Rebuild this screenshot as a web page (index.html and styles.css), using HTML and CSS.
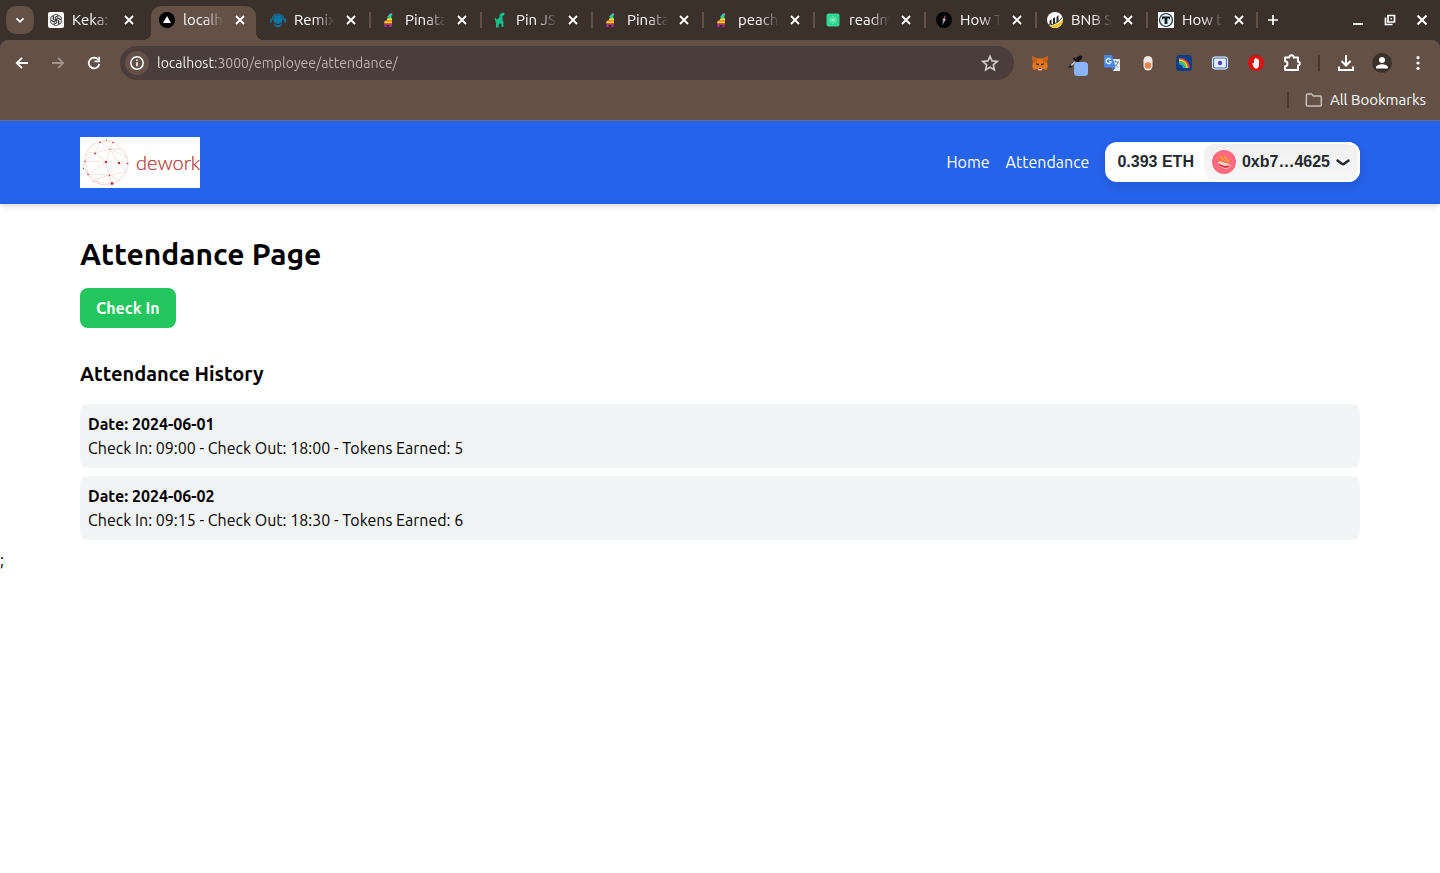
FILE: index.html
```html
<!DOCTYPE html>
<html lang="en">
<head>
<meta charset="utf-8">
<meta name="viewport" content="width=device-width, initial-scale=1">
<title>Attendance</title>
<link rel="stylesheet" href="styles.css">
</head>
<body>
<svg class="defs" aria-hidden="true">
  <symbol id="close" viewBox="0 0 16 16"><path d="M4 4l8 8M12 4l-8 8" stroke="#fff" stroke-width="1.800"/></symbol>
  <symbol id="pinata" viewBox="0 0 16 16"><path d="M6 5l3-3.500 2.500.5-1.500 3z" fill="#30c8b8"/><path d="M9 1.500L10.500.5 11 2z" fill="#e63888"/><path d="M7 4.500h3.500v2.500H6.500z" fill="#38c878"/><path d="M6.500 6.500h4.500v2H5.500z" fill="#f4e830"/><path d="M4 8.500l7-.500v2H4z" fill="#f58a20"/><path d="M3 9.500l8 .3v1.700H3.500z" fill="#f4dc20"/><path d="M3.500 11.300h7.500v1.400H3.500z" fill="#f03c50"/><path d="M3.500 12.500h2v2.500h-2zM8.500 12.500h2v2.500h-2z" fill="#c020c8"/></symbol>
</svg>
<header class="browser">
  <div class="strip">
    <button class="tab-search" aria-label="Search tabs"><svg width="16" height="16" viewBox="0 0 16 16"><path d="M4.500 6.300L8 9.800l3.500-3.500" fill="none" stroke="#fff" stroke-width="1.800"/></svg></button>
    <div class="tabs">
      <div class="tab"><svg class="fav" viewBox="0 0 16 16"><rect width="16" height="16" rx="2" fill="#fff"/><g fill="none" stroke="#222" stroke-width=".8"><path id="petal" d="M5.300 8V4.800a2.700 2.700 0 0 1 5-1.300L7.300 5.300v3"/><use href="#petal" transform="rotate(60 8 8)"/><use href="#petal" transform="rotate(120 8 8)"/><use href="#petal" transform="rotate(180 8 8)"/><use href="#petal" transform="rotate(240 8 8)"/><use href="#petal" transform="rotate(300 8 8)"/></g></svg><span class="title">Keka:</span><button class="x" aria-label="Close tab"><svg><use href="#close"/></svg></button></div>
      <div class="tab active"><svg class="fav" viewBox="0 0 16 16"><circle cx="8" cy="8" r="8" fill="#000"/><path d="M8 4l4 7H4z" fill="#fff"/></svg><span class="title">localh</span><button class="x" aria-label="Close tab"><svg><use href="#close"/></svg></button></div>
      <div class="tab"><svg class="fav" viewBox="0 0 16 16"><circle cx="8" cy="7.500" r="4.600" fill="#0b76a4"/><path d="M2 8a6 6 0 0 1 12 0" fill="none" stroke="#0b76a4" stroke-width="1.200"/><path d="M0 6.500h1.800v4H0zM14.200 6.500H16v4h-1.800z" fill="#0b76a4"/><path d="M3 11l3 2h4l3-2-2 3-3 1.500L5 14z" fill="#0b76a4"/></svg><span class="title">Remix</span><button class="x" aria-label="Close tab"><svg><use href="#close"/></svg></button></div>
      <div class="tab sep"><svg class="fav"><use href="#pinata"/></svg><span class="title">Pinata</span><button class="x" aria-label="Close tab"><svg><use href="#close"/></svg></button></div>
      <div class="tab sep"><svg class="fav" viewBox="0 0 16 16"><path d="M7 6l1-4 3-1.500 1.500.5-.5 2.500-1.500.5v4.500l1 1v5.500H9.500V12l-2.500-.5-.5 4H4V11L2.500 6.500 3.500 6l1.500 1.500z" fill="#10bd86"/></svg><span class="title">Pin JS</span><button class="x" aria-label="Close tab"><svg><use href="#close"/></svg></button></div>
      <div class="tab sep"><svg class="fav"><use href="#pinata"/></svg><span class="title">Pinata</span><button class="x" aria-label="Close tab"><svg><use href="#close"/></svg></button></div>
      <div class="tab sep"><svg class="fav"><use href="#pinata"/></svg><span class="title">peach</span><button class="x" aria-label="Close tab"><svg><use href="#close"/></svg></button></div>
      <div class="tab sep"><svg class="fav" viewBox="0 0 16 16"><rect x="1.500" y="1.500" width="13" height="13" rx="2" fill="#2fd890"/><path d="M8 4v8M5 5.500l6 5M11 5.500l-6 5M4 8h8" stroke="#8fefc2" stroke-width=".9"/></svg><span class="title">readm</span><button class="x" aria-label="Close tab"><svg><use href="#close"/></svg></button></div>
      <div class="tab sep"><svg class="fav" viewBox="0 0 16 16"><circle cx="8" cy="8" r="8" fill="#000"/><path d="M10 2.500L6 8.500h2.200z" fill="#e78"/><path d="M6 13.500l4-6.500H7.800z" fill="#9cc9dc"/></svg><span class="title">How T</span><button class="x" aria-label="Close tab"><svg><use href="#close"/></svg></button></div>
      <div class="tab sep"><svg class="fav" viewBox="0 0 16 16"><circle cx="8" cy="8" r="8" fill="#fff"/><path d="M2.500 12V9l2-2v5zM6 12V6.500l2-1.500v6.500zM9.500 11V5l2-2v6.500z" fill="#222"/><path d="M2 13.300C8 14 13 11 15.800 7A8 8 0 0 1 2 13.300z" fill="#efc71c"/><path d="M1.500 12.800C7 13 12 10 15 5.500" fill="none" stroke="#222" stroke-width="1"/></svg><span class="title">BNB S</span><button class="x" aria-label="Close tab"><svg><use href="#close"/></svg></button></div>
      <div class="tab sep"><svg class="fav" viewBox="0 0 16 16"><rect width="16" height="16" fill="#fff"/><circle cx="8" cy="8" r="6.500" fill="#e6edf2" stroke="#183448" stroke-width="1.200"/><path d="M4 4.500h8v2.800h-1.200V6.500H9.400V12H6.600V6.500H5.200v.8H4z" fill="#101c26"/></svg><span class="title">How t</span><button class="x" aria-label="Close tab"><svg><use href="#close"/></svg></button></div>
      <button class="new-tab" aria-label="New tab"><svg width="16" height="16" viewBox="0 0 16 16"><path d="M8 3v10M3 8h10" stroke="#fff" stroke-width="1.700"/></svg></button>
    </div>
    <div class="window">
      <button aria-label="Minimise"><svg width="16" height="16" viewBox="0 0 16 16"><path d="M3 12h10" stroke="#fff" stroke-width="1.800"/></svg></button>
      <button aria-label="Restore"><svg width="16" height="16" viewBox="0 0 16 16"><g fill="none" stroke="#fff" stroke-width="1.700"><path d="M6 3.500h6.500v6.500H6z"/><path d="M3.500 5.500v7h7"/></g><path d="M8.500 6h1.500v1.500H8.500z" fill="#fff"/></svg></button>
      <button aria-label="Close window"><svg width="16" height="16" viewBox="0 0 16 16"><path d="M3.500 3.500l9 9M12.500 3.500l-9 9" stroke="#fff" stroke-width="2"/></svg></button>
    </div>
  </div>
  <div class="chrome">
    <div class="toolbar">
      <button class="tool" aria-label="Back"><svg viewBox="0 0 16 16"><path d="M14 8H3M8 2.800L2.800 8 8 13.200" fill="none" stroke="#fff" stroke-width="1.800"/></svg></button>
      <button class="tool" aria-label="Forward"><svg viewBox="0 0 16 16"><path d="M2 8h11M8 2.800L13.200 8 8 13.200" fill="none" stroke="#a0948c" stroke-width="1.800"/></svg></button>
      <button class="tool" aria-label="Reload"><svg viewBox="0 0 16 16"><path d="M12.300 4.800A5.300 5.300 0 1 0 13.300 9" fill="none" stroke="#fff" stroke-width="1.800"/><path d="M13.900 1.700v5.500H8.400V5.600h3.900V1.700z" fill="#fff"/></svg></button>
      <div class="omnibox">
        <button class="info" aria-label="Site information"><svg width="16" height="16" viewBox="0 0 16 16"><circle cx="8" cy="8" r="6.200" fill="none" stroke="#fff" stroke-width="1.500"/><path d="M8 7.300v4M8 4.500v1.500" stroke="#fff" stroke-width="1.600"/></svg></button>
        <input class="url" aria-label="Address" value="localhost:3000/employee/attendance/">
        <button class="star" aria-label="Bookmark"><svg width="18" height="18" viewBox="0 0 18 18"><path d="M9 2.200l2 4.700 5.200.5-3.900 3.400 1.100 5L9 13.200l-4.400 2.600 1.100-5-3.900-3.400L7 6.900z" fill="none" stroke="#d3cbc8" stroke-width="1.600"/></svg></button>
      </div>
      <button class="tool" aria-label="MetaMask"><svg viewBox="0 0 16 16"><path d="M0 1l5.500 2.500h5L16 1l-1 6 .8 4-1.300 4-3.500-1-1.500 2h-3L5 14l-3.500 1L.2 11 1 7z" fill="#e2761b"/><path d="M0 1l5.500 3-1 4L1 7zM16 1l-5.500 3 1 4L15 7z" fill="#c95f18"/><path d="M4 8l3 1v1.300L4.500 10zM12 8L9 9v1.300l2.500-.3z" fill="#53331e"/><path d="M6 13h4l-.5 2h-3z" fill="#d8c1a5"/><path d="M6.800 13h2.400v1H6.800z" fill="#222"/></svg></button>
      <button class="tool" aria-label="Eyedropper"><svg class="dropper" viewBox="0 0 28 28"><path d="M14 9l4-2.500 2.500.5-1 3-3 2.500z" fill="#090909"/><path d="M12 8.500l6 5-1.200 1.300-6-5z" fill="#090909"/><path d="M6 19l1-2 6-6 2 2-6 5.500z" fill="#28231f"/><path d="M8.500 16l4-4 1.500 1-4 4z" fill="#c8c0b8"/><rect x="12" y="13" width="14" height="14" rx="3.500" fill="#8ab4f8"/></svg></button>
      <button class="tool" aria-label="Translate"><svg viewBox="0 0 16 16"><path d="M6 4h9a1 1 0 0 1 1 1v11H9z" fill="#e5e7e8"/><path d="M8 7h7M11.500 5.500V7M9.500 12c3-1 4-3 4.500-5M10 8.500l4 4" stroke="#6784a3" stroke-width=".9" fill="none"/><path d="M1 0h7l3.500 12.500H1a1 1 0 0 1-1-1V1a1 1 0 0 1 1-1z" fill="#4a88e8"/><path d="M7.500 12.500h4L9 16z" fill="#3165bf"/><path d="M6.700 4.800A2.500 2.500 0 1 0 7 6.800H5" fill="none" stroke="#fff" stroke-width="1.200"/></svg></button>
      <button class="tool" aria-label="Recorder"><svg viewBox="0 0 16 16"><rect x="3.500" y="1" width="9" height="14.500" rx="4.500" fill="#eeeae7"/><circle cx="8" cy="10.500" r="3.300" fill="#ed814e"/></svg></button>
      <button class="tool" aria-label="Rainbow"><svg viewBox="0 0 16 16"><rect width="16" height="16" rx="3.500" fill="#103c85"/><g fill="none" stroke-width="1.700"><path d="M3 3.500A9.500 9.500 0 0 1 12.800 13" stroke="#e54735"/><path d="M3 5.200A7.800 7.800 0 0 1 11.100 13" stroke="#fed52d"/><path d="M3 6.900A6.100 6.100 0 0 1 9.400 13" stroke="#5bcb5a"/><path d="M3 8.600A4.400 4.400 0 0 1 7.700 13" stroke="#26a8dd"/></g></svg></button>
      <button class="tool" aria-label="Screen capture"><svg viewBox="0 0 16 16"><rect y="1.500" width="16" height="13" rx="3" fill="#fff"/><rect x="1.500" y="3" width="13" height="10" rx="1.500" fill="#e6f0ff" stroke="#2b69d1" stroke-width="1.200"/><circle cx="8" cy="8" r="2.200" fill="#4f43c4"/></svg></button>
      <button class="tool" aria-label="Ad blocker"><svg viewBox="0 0 16 16"><circle cx="8" cy="8" r="8" fill="#df1010"/><path d="M4.300 8.300l1-.5.7 1V4.300h1.200V3h1.200v.7h1.200v.8h1.300V10c0 2-1 3.600-3 3.600C6 13.600 5 11 4.300 8.300z" fill="#fff"/></svg></button>
      <button class="tool" aria-label="Extensions"><svg class="wide" viewBox="0 0 20 20"><path d="M3 4.500h4.300a2.200 2.200 0 0 1 4.400 0H16v4.200a1.800 1.800 0 0 1 0 3.600V17H3v-3.700a2.500 2.500 0 0 0 0-5z" fill="none" stroke="#fff" stroke-width="1.900" stroke-linejoin="round"/></svg></button>
      <span class="rule gap"></span>
      <button class="tool" aria-label="Downloads"><svg viewBox="0 0 16 16"><path d="M8 0v10M3.500 6L8 10.500 12.500 6M1 11.500V15h14v-3.500" fill="none" stroke="#fff" stroke-width="2"/></svg></button>
      <button class="tool" aria-label="Profile"><svg class="wide" viewBox="0 0 20 20"><circle cx="10" cy="10" r="10" fill="#3c302b"/><circle cx="10" cy="7" r="3" fill="#fff"/><path d="M4 15.500v-1.200c0-2 4-3 6-3s6 1 6 3v1.200z" fill="#fff"/></svg></button>
      <button class="tool" aria-label="Menu"><svg viewBox="0 0 16 16"><g fill="#fff"><circle cx="8" cy="2.700" r="1.600"/><circle cx="8" cy="8" r="1.600"/><circle cx="8" cy="13.300" r="1.600"/></g></svg></button>
    </div>
    <div class="bookmarks">
      <span class="rule"></span>
      <button class="all"><svg width="18" height="16" viewBox="0 0 18 16"><path d="M1.500 3a1 1 0 0 1 1-1h4l1.800 2h7a1 1 0 0 1 1 1v8a1 1 0 0 1-1 1h-13a1 1 0 0 1-1-1z" fill="none" stroke="#c8bfba" stroke-width="1.500"/></svg>All Bookmarks</button>
    </div>
  </div>
</header>
<nav class="nav">
  <div class="container nav-row">
    <a class="logo" href="#" aria-label="dework">
      <svg width="120" height="51" viewBox="0 0 120 51">
        <rect width="120" height="51" fill="#fff"/>
        <g fill="none" stroke="#ecd0cd" stroke-width=".6">
          <path d="M20 5L33 5 41 12 47 20 48 26 46 35 40 43 32 47 22 48 12 44 8 37 3 31 5 24 7 15 15 16 20 5 30 12 41 12M15 16L30 12 33 5M15 16L26 25 30 12 39 26 48 26M5 24L15 16M5 24L26 25 39 26 29 38 26 25 8 37 29 38 46 35 39 26 47 20 30 12M8 37L5 24M29 38L32 47 12 44 29 38 40 43M7 15L12 8 20 5 27 3 33 5M3 31L8 37 22 48"/>
          <circle cx="26" cy="25.500" r="22" stroke-dasharray="3 2"/>
        </g>
        <g fill="#b73535"><circle cx="26" cy="25" r="1.200"/><circle cx="39" cy="26" r="1.200"/><circle cx="32" cy="46.500" r="1.400"/><circle cx="15" cy="16.500" r=".9"/><circle cx="20" cy="5.500" r=".8"/><circle cx="33" cy="5.500" r=".8"/><circle cx="8" cy="37.500" r=".8"/><circle cx="29.500" cy="38.500" r=".7"/><circle cx="47.500" cy="26.500" r=".8"/><circle cx="5" cy="24.500" r=".7"/><circle cx="30" cy="12.500" r=".6"/><circle cx="3.500" cy="31.500" r=".6"/><circle cx="26.500" cy="3" r=".6"/></g>
        <text class="wordmark" x="56" y="33">dework</text>
      </svg>
    </a>
    <div class="links">
      <a href="#">Home</a>
      <a href="#">Attendance</a>
      <div class="wallet">
        <span class="balance">0.393 ETH</span>
        <button class="account"><svg width="24" height="24" viewBox="0 0 24 24"><circle cx="12" cy="12" r="12" fill="#ff6a80"/><path d="M6 12.500l2-1.500 10 3.500 1 1.500-2.500 2.200-4 .6L7 16z" fill="#f0d5cc"/><path d="M6.500 13.500l6 2.500 5.500-.8-1 2-4.500.8L7 15.500z" fill="#e8303c"/><path d="M6 8.500c1-2.500 3.500-3.500 6-2.700l6 4c1.500 1.500 0 3.500-1.500 3.200l-9-1.700c-1.400-.4-2-1.500-1.500-2.800z" fill="#ff7a45"/><path d="M8.500 6.500l5 5M12 6l4.500 6" stroke="#ffad7a" stroke-width="1"/></svg><span>0xb7…4625</span><svg width="14" height="7" viewBox="0 0 14 7"><path d="M1.500 1.500L5.800 4.700a2 2 0 0 0 2.400 0L12.500 1.500" fill="none" stroke="#25292e" stroke-width="2.400" stroke-linecap="round"/></svg></button>
      </div>
    </div>
  </div>
</nav>
<main class="container page">
  <h1>Attendance Page</h1>
  <button class="check">Check In</button>
  <h2>Attendance History</h2>
  <ul class="history">
    <li><strong>Date: 2024-06-01</strong><p>Check In: 09:00 - Check Out: 18:00 - Tokens Earned: 5</p></li>
    <li><strong>Date: 2024-06-02</strong><p>Check In: 09:15 - Check Out: 18:30 - Tokens Earned: 6</p></li>
  </ul>
</main>
<div class="stray">;</div>
</body>
</html>
```

FILE: styles.css
```css
* { box-sizing: border-box; }
body {
  margin: 0;
  background: #fff;
  color: #000;
  font: 16px/24px Ubuntu, "Noto Sans", sans-serif;
}
button {
  border: 0;
  padding: 0;
  background: none;
  color: inherit;
  font: inherit;
}
svg { display: block; flex: none; }
a { color: inherit; text-decoration: none; }
h1, h2, p, ul { margin: 0; padding: 0; }
.defs { position: absolute; width: 0; height: 0; }

/* Browser window */
.browser {
  background: #3c302b;
  color: #fff;
  font-size: 15px;
  border-bottom: 1px solid #746a72;
}
.strip { display: flex; height: 40px; padding: 0 8px 0 6px; }
.tab-search {
  display: grid;
  place-items: center;
  flex: none;
  width: 28px;
  height: 28px;
  margin: 6px 6px 0 0;
  border-radius: 10px;
  background: #635046;
}
.tabs { display: flex; flex: 1; min-width: 0; }
.tab {
  position: relative;
  display: flex;
  align-items: center;
  gap: 8px;
  flex: 0 1 111px;
  min-width: 0;
  padding: 0 14px 0 8px;
}
.fav { width: 16px; height: 16px; }
.title {
  flex: 1;
  min-width: 0;
  white-space: nowrap;
  -webkit-mask-image: linear-gradient(90deg, #000 50%, transparent);
  mask-image: linear-gradient(90deg, #000 50%, transparent);
}
.x svg { width: 16px; height: 16px; }
.sep::before {
  content: "";
  position: absolute;
  left: -4px;
  top: 12px;
  width: 2px;
  height: 16px;
  background: #635046;
}
.active::before {
  content: "";
  position: absolute;
  inset: 6px 6px 0 0;
  border-radius: 10px 10px 0 0;
  background: #635046;
}
.active::after {
  content: "";
  position: absolute;
  left: -8px;
  right: -2px;
  bottom: 0;
  height: 8px;
  background:
    radial-gradient(circle at 0 0, transparent 8px, #635046 8px) left / 8px 8px no-repeat,
    radial-gradient(circle at 100% 0, transparent 8px, #635046 8px) right / 8px 8px no-repeat;
}
.active > * { position: relative; }
.new-tab {
  position: relative;
  display: grid;
  place-items: center;
  flex: none;
  width: 28px;
  margin-left: -2px;
}
.new-tab::before {
  content: "";
  position: absolute;
  left: -3px;
  top: 12px;
  width: 2px;
  height: 16px;
  background: #635046;
}
.window { display: flex; align-items: center; gap: 16px; padding-right: 2px; }
.chrome { background: #635046; border-radius: 8px 8px 0 0; }
.toolbar {
  display: flex;
  align-items: center;
  gap: 8px;
  height: 46px;
  padding: 0 8px;
}
.tool { display: grid; place-items: center; flex: none; width: 28px; height: 28px; }
.tool svg { width: 16px; height: 16px; }
.tool .wide { width: 20px; height: 20px; }
.tool .dropper { width: 28px; height: 28px; }
.omnibox {
  display: flex;
  align-items: center;
  flex: 1;
  min-width: 0;
  height: 34px;
  margin: 0 4px;
  padding: 0 15px 0 5px;
  border-radius: 17px;
  background: #4b3d3a;
}
.info {
  display: grid;
  place-items: center;
  width: 24px;
  height: 24px;
  border-radius: 12px;
  background: #635046;
}
.url {
  flex: 1;
  min-width: 0;
  margin-left: 8px;
  padding: 0;
  border: 0;
  outline: 0;
  font: inherit;
  font-size: 14px;
  color: transparent;
  background: linear-gradient(90deg, #fff 58px, #c0b7b4 58px);
  -webkit-background-clip: text;
  background-clip: text;
}
.rule { width: 2px; height: 16px; background: #46372f; }
.rule.gap { margin: 0 4px; }
.bookmarks {
  display: flex;
  align-items: center;
  justify-content: flex-end;
  gap: 16px;
  height: 34px;
  padding: 0 14px 6px 0;
}
.all { display: flex; align-items: center; gap: 7px; }

/* Site navigation */
.container { width: 100%; max-width: 1280px; margin: 0 auto; }
.nav {
  background: #2563eb;
  color: #fff;
  box-shadow: 0 4px 6px -1px rgba(0, 0, 0, .1), 0 2px 4px -2px rgba(0, 0, 0, .1);
}
.nav-row { display: flex; align-items: center; justify-content: space-between; padding: 16px 0; }
.wordmark { font: 300 20px Lato, sans-serif; fill: #b53030; stroke: #b53030; stroke-width: .2px; }
.links { display: flex; align-items: center; gap: 16px; padding-bottom: 1px; }
.wallet {
  display: flex;
  align-items: center;
  border-radius: 12px;
  background: #fff;
  color: #25292e;
  font: bold 16px/24px "Liberation Sans", Arial, sans-serif;
  box-shadow: 0 4px 12px rgba(0, 0, 0, .1);
}
.balance { padding: 8px 8px 8px 12px; }
.account {
  display: flex;
  align-items: center;
  gap: 6px;
  height: 40px;
  padding: 0 8px;
  border: 2px solid #fff;
  border-radius: 12px;
  background: linear-gradient(#f0f0f0, #f7f7f7) padding-box;
}

/* Attendance */
.page { padding-top: 32px; }
h1 { font-size: 30px; line-height: 36px; font-weight: 700; }
.check {
  margin: 16px 0 32px;
  padding: 8px 16px;
  border-radius: 8px;
  background: #22c55e;
  color: #fff;
  font-weight: 700;
}
h2 { margin-bottom: 16px; font-size: 20px; line-height: 28px; font-weight: 600; }
.history { list-style: none; }
.history li { margin-bottom: 8px; padding: 8px; border-radius: 8px; background: #f3f4f6; }
.history strong { display: block; }
```
